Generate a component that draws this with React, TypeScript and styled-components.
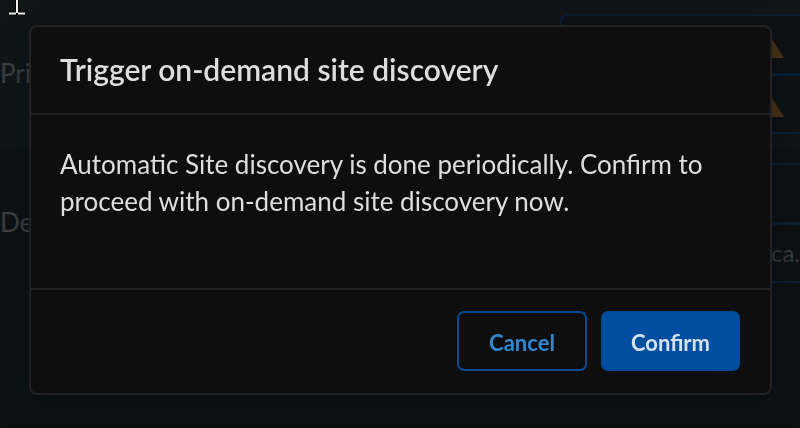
import React from "react";
import styled, { createGlobalStyle } from "styled-components";

const GlobalStyle = createGlobalStyle`
  * { box-sizing: border-box; }
  body {
    margin: 0;
    background: #0d1215;
    font-family: Lato, "Open Sans", sans-serif;
    overflow: hidden;
  }
`;

const Page = styled.main`
  position: relative;
  display: flex;
  flex-direction: column;
  min-height: 100vh;
  border-bottom: 2px solid #0c0b0e;
`;

const Row = styled.section<{ $first?: boolean }>`
  display: grid;
  grid-template-columns: 35% 35% 30%;
  padding-top: 14px;
  padding-bottom: 15px;
  background: ${(p) => (p.$first ? "#101518" : "#0d1215")};
`;

const RowLabel = styled.div`
  align-self: center;
  padding-bottom: 2px;
  font-size: 26px;
  line-height: 32px;
  color: #3b3f41;
`;

const Fields = styled.div`
  grid-column: 3;
  border: 2px solid #091f37;
  border-right: 0;
  border-radius: 8px 0 0 8px;
  background: #0d1215;
`;

const Field = styled.div`
  display: flex;
  align-items: center;
  justify-content: flex-end;
  height: 57px;
  padding-bottom: 2px;
  font-size: 24px;
  color: #35393b;

  & + & {
    height: 59px;
    border-top: 3px solid #091f37;
  }
`;

const Warning = styled.svg`
  width: 34px;
  height: 20px;
  margin-right: 15px;
  margin-top: 8px;
`;

const Cursor = styled.svg`
  position: absolute;
  top: 0;
  left: 9px;
  width: 16px;
  height: 15px;
`;

const Overlay = styled.div`
  position: fixed;
  inset: 0;
  padding: 25px 28px 0 29px;
`;

const Dialog = styled.div`
  border: 2px solid #222;
  border-radius: 8px;
  background: #0e0e0e;
  box-shadow: 0 8px 32px rgba(0, 0, 0, 0.3);
  color: #dedede;
`;

const Header = styled.header`
  padding: 23px 29px 25px;
  border-bottom: 2px solid #222;
`;

const Title = styled.h1`
  margin: 0;
  font-size: 30px;
  line-height: 38px;
  font-weight: 600;
`;

const Body = styled.div`
  padding: 31px 29px 68px;
  font-size: 26px;
  line-height: 37px;
`;

const Message = styled.p`
  margin: 0;
`;

const Footer = styled.footer`
  display: flex;
  justify-content: flex-end;
  gap: 14px;
  padding: 21px 30px 22px;
  border-top: 2px solid #222;
`;

const Button = styled.button<{ $primary?: boolean }>`
  height: 60px;
  min-width: 130px;
  padding: 2px 28px 0;
  border: 2px solid #024a96;
  border-radius: 7px;
  background: ${(p) => (p.$primary ? "#004e9f" : "transparent")};
  color: ${(p) => (p.$primary ? "#d5e1ee" : "#3187d2")};
  font-family: inherit;
  font-size: 22px;
  font-weight: 700;
`;

const WarningIcon = () => (
  <Warning viewBox="0 0 34 20" aria-hidden="true">
    <path d="M17 0 Q19 -1 21 1 L33 20 H2 Z" fill="#4a3118" />
  </Warning>
);

export default function App() {
  return (
    <>
      <GlobalStyle />
      <Page>
        <Row $first>
          <RowLabel>Pri</RowLabel>
          <Fields>
            <Field><WarningIcon /></Field>
            <Field><WarningIcon /></Field>
          </Fields>
        </Row>
        <Row>
          <RowLabel>De</RowLabel>
          <Fields>
            <Field />
            <Field>ca.</Field>
          </Fields>
        </Row>
        <Overlay>
          <Dialog role="dialog" aria-modal="true" aria-labelledby="dialog-title">
            <Header>
              <Title id="dialog-title">Trigger on-demand site discovery</Title>
            </Header>
            <Body>
              <Message>
                Automatic Site discovery is done periodically. Confirm to proceed
                with on-demand site discovery now.
              </Message>
            </Body>
            <Footer>
              <Button type="button">Cancel</Button>
              <Button type="button" $primary>Confirm</Button>
            </Footer>
          </Dialog>
        </Overlay>
        <Cursor viewBox="0 0 16 15" aria-hidden="true">
          <path d="M8 0 V13 M0 13.5 H16" stroke="#000" strokeWidth="4" fill="none" />
          <path d="M8 0 V13 M0 13.5 H7 M9 13.5 H16" stroke="#f4f0ec" strokeWidth="2" fill="none" />
        </Cursor>
      </Page>
    </>
  );
}
